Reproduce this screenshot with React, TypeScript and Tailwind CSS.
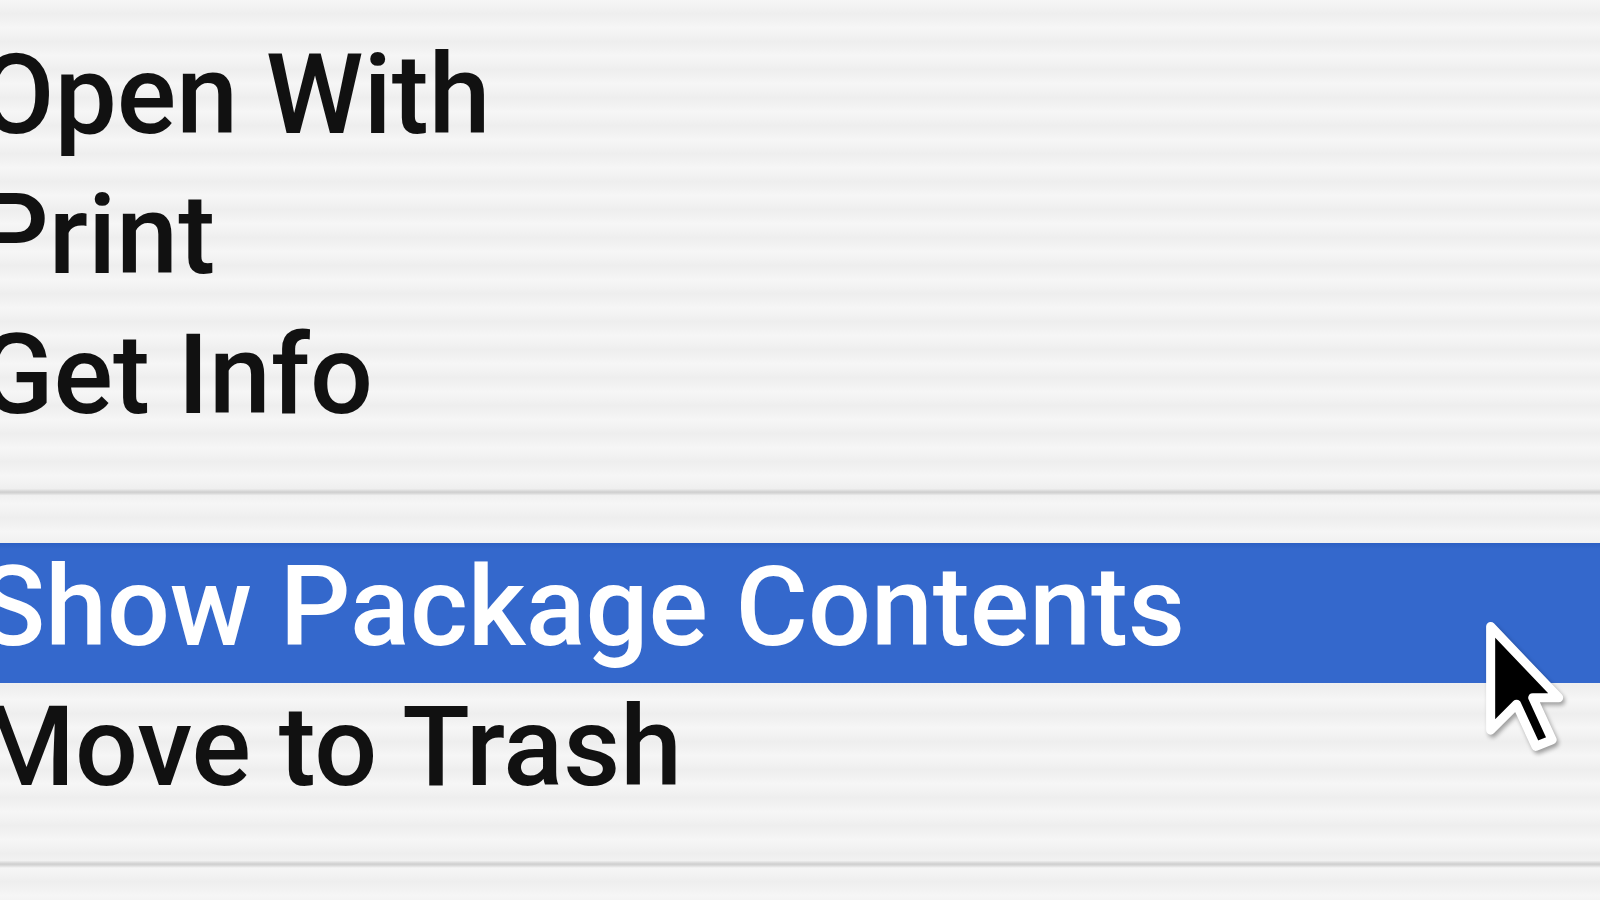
import React from 'react';

type ItemProps = { label: string; active?: boolean };

const MenuItem: React.FC<ItemProps> = ({ label, active }) => (
  <div
    className={
      active
        ? 'h-[140px] bg-[linear-gradient(180deg,#2c5fc4_0px,#3468cc_6px,#3468cc_100%)] text-white'
        : 'h-[140px] text-[#111111]'
    }
  >
    <div className="ml-[-22px] whitespace-nowrap text-[111px] font-medium leading-[129px]">{label}</div>
  </div>
);

const Separator: React.FC = () => (
  <div className="flex h-[92px] flex-col pt-[38px]">
    <div className="h-[7px] w-full bg-[linear-gradient(180deg,#ececec_0px,#cfcfcf_3px,#d4d4d4_4px,#f6f6f6_7px)]" />
  </div>
);

const Cursor: React.FC = () => (
  <svg
    className="absolute left-[1484px] top-[620px] drop-shadow-[2px_3px_2px_rgba(0,0,0,0.35)]"
    width="91"
    height="136"
    viewBox="0 0 14 21"
  >
    <path
      d="M1 1 L1 17 L5 13 L8 19.5 L10.5 18.5 L7.5 12 L11.5 12 Z"
      fill="#000000"
      stroke="#ffffff"
      strokeWidth="1.4"
      strokeLinejoin="round"
    />
  </svg>
);

export default function App() {
  return (
    <div className="relative h-[900px] w-[1600px] overflow-hidden bg-[repeating-linear-gradient(180deg,#f6f6f6_0px,#eeeeee_14px,#f6f6f6_28px)] font-['Roboto',sans-serif]">
      <div className="pt-[31px]">
        <MenuItem label="Open With" />
        <MenuItem label="Print" />
        <MenuItem label="Get Info" />
        <Separator />
        <MenuItem label="Show Package Contents" active />
        <MenuItem label="Move to Trash" />
        <Separator />
      </div>
      <Cursor />
    </div>
  );
}
